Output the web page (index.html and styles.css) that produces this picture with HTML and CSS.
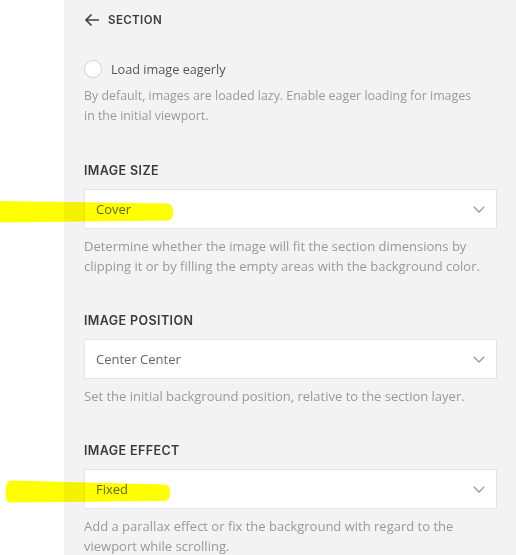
FILE: index.html
```html
<!DOCTYPE html>
<html lang="en">
<head>
<meta charset="utf-8">
<title>Section settings</title>
<link rel="stylesheet" href="styles.css">
</head>
<body>
<div class="page">
  <div class="gutter"></div>
  <div class="panel">
    <div class="back">
      <svg class="back-icon" width="16" height="14" viewBox="0 0 16 14" aria-hidden="true">
        <path d="M15 7H2 M7.5 1.5 L2 7 L7.5 12.5" fill="none" stroke="#444" stroke-width="1.7"/>
      </svg>
      <span class="back-label">SECTION</span>
    </div>

    <label class="check-row">
      <span class="radio"></span>
      <span class="check-label">Load image eagerly</span>
    </label>
    <p class="desc desc-small">By default, images are loaded lazy. Enable eager loading for images in the initial viewport.</p>

    <div class="field">
      <h3 class="field-title">IMAGE SIZE</h3>
      <div class="select"><span>Cover</span>
        <svg class="chev" width="12" height="7" viewBox="0 0 12 7"><path d="M0.8 0.8 L6 6 L11.2 0.8" fill="none" stroke="#9a9a9a" stroke-width="1.3"/></svg>
      </div>
      <p class="desc">Determine whether the image will fit the section dimensions by clipping it or by filling the empty areas with the background color.</p>
    </div>

    <div class="field">
      <h3 class="field-title">IMAGE POSITION</h3>
      <div class="select"><span>Center Center</span>
        <svg class="chev" width="12" height="7" viewBox="0 0 12 7"><path d="M0.8 0.8 L6 6 L11.2 0.8" fill="none" stroke="#9a9a9a" stroke-width="1.3"/></svg>
      </div>
      <p class="desc">Set the initial background position, relative to the section layer.</p>
    </div>

    <div class="field">
      <h3 class="field-title">IMAGE EFFECT</h3>
      <div class="select"><span>Fixed</span>
        <svg class="chev" width="12" height="7" viewBox="0 0 12 7"><path d="M0.8 0.8 L6 6 L11.2 0.8" fill="none" stroke="#9a9a9a" stroke-width="1.3"/></svg>
      </div>
      <p class="desc">Add a parallax effect or fix the background with regard to the viewport while scrolling.</p>
    </div>
  </div>

  <svg class="marker" width="516" height="555" viewBox="0 0 516 555" aria-hidden="true">
    <path d="M0 201 L168 203.5 Q173 204 173 212 Q173 220 168 220.5 L0 222.5 Z" fill="#ffff00"/>
    <path d="M10 480.5 L165 484.5 Q170 485 170 492.5 Q170 500.5 165 501 L10 502.5 Q5 502 5.5 491.5 Q6 481 10 480.5 Z" fill="#ffff00"/>
  </svg>
</div>
</body>
</html>
```

FILE: styles.css
```css
html, body {
  margin: 0;
  padding: 0;
  background: #ffffff;
}

.page {
  position: relative;
  display: flex;
  width: 516px;
  height: 555px;
  overflow: hidden;
}

.gutter {
  width: 64px;
  flex: none;
  background: #ffffff;
}

.panel {
  flex: 1;
  background: #f3f3f3;
  padding: 0 19px 0 20px;
  font-family: "Open Sans", "Liberation Sans", sans-serif;
  font-size: 13px;
  line-height: 20px;
  color: #666;
}

.back {
  display: flex;
  align-items: center;
  gap: 8px;
  height: 40px;
}

.back-icon {
  display: block;
}

.back-label,
.field-title {
  font-family: "Inter", "Noto Sans", sans-serif;
  font-weight: 600;
  letter-spacing: 0.4px;
  color: #3a3a3a;
}

.back-label {
  font-size: 11.5px;
}

.check-row {
  display: flex;
  align-items: center;
  gap: 9px;
  height: 20px;
  margin-top: 19px;
}

.radio {
  width: 16px;
  height: 16px;
  border: 1px solid #d4d4d4;
  border-radius: 50%;
  background: #fff;
  flex: none;
}

.check-label {
  color: #555;
  font-size: 12.7px;
}

.desc {
  margin: 6px 0 0;
  color: #999;
}

.desc-small {
  margin-top: 7px;
  font-size: 12.4px;
  max-width: 390px;
}

.field {
  margin-top: 35px;
}

.field-title {
  margin: 0 0 8px;
  font-size: 12.5px;
  line-height: 20px;
}

.select {
  box-sizing: border-box;
  height: 40px;
  display: flex;
  align-items: center;
  justify-content: space-between;
  padding: 0 11px 0 11px;
  background: #fff;
  border: 1px solid #e5e5e5;
  color: #666;
}

.select + .desc {
  margin-top: 7px;
}

.chev {
  display: block;
}

.marker {
  position: absolute;
  left: 0;
  top: 0;
  mix-blend-mode: multiply;
  pointer-events: none;
}
```
